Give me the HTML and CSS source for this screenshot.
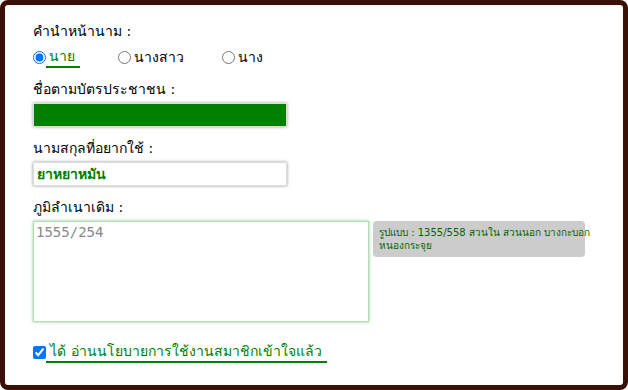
FILE: index.html
```html
<!DOCTYPE html>
<html lang="th">

<head>
    <meta charset="utf-8">
    <title>สมัครสมาชิก</title>
    <link rel="stylesheet" href="styles.css">
</head>

<body>
    <form class="frm">
        <div class="row">
            <label class="lbl">คำนำหน้านาม :</label>
            <div class="radios">
                <label class="opt"><input type="radio" name="title" checked><span class="valgt"> นาย</span></label>
                <label class="opt"><input type="radio" name="title"><span>นางสาว</span></label>
                <label class="opt"><input type="radio" name="title"><span>นาง</span></label>
            </div>
        </div>

        <div class="row">
            <label class="lbl">ชื่อตามบัตรประชาชน :</label>
            <input class="txt fyldt" type="text" value="">
        </div>

        <div class="row">
            <label class="lbl">นามสกุลที่อยากใช้ :</label>
            <input class="txt" type="text" value="ยาหยาหมัน">
        </div>

        <div class="row">
            <label class="lbl">ภูมิลำเนาเดิม :</label>
            <div class="addr">
                <textarea class="area">1555/254</textarea>
                <div class="tip">รูปแบบ : 1355/558 สวนใน สวนนอก บางกะบอก<br>หนองกระจุย</div>
            </div>
        </div>

        <label class="accept"><input type="checkbox" checked><span class="valgt">&nbsp;ได้ อ่านนโยบายการใช้งานสมาชิกเข้าใจแล้ว</span></label>
    </form>
</body>

</html>
```

FILE: styles.css
```css
*,
body * {
    box-sizing: border-box;
}

html {
    height: 100%;
}

body {
    margin: 0;
    height: 100%;
    border: 5px solid #3b1106;
    border-radius: 8px;
    background-color: #fff;
    font-family: Tahoma, "DejaVu Sans", "Noto Sans", sans-serif;
    font-size: 14px;
    color: #000;
}

.frm {
    padding: 16px 0 0 28px;
}

.row {
    margin-bottom: 11px;
}

.lbl {
    display: block;
    line-height: 20px;
    margin-bottom: 4px;
}

.radios {
    display: flex;
    line-height: 20px;
    margin-top: 5px;
}

.opt {
    display: flex;
    align-items: center;
    gap: 3px;
    margin-right: 38px;
}

.opt input {
    margin: 0;
    width: 13px;
    height: 13px;
}

.valgt {
    color: green;
    border-bottom: 2px solid green;
    padding-right: 5px;
}

.opt .valgt {
    margin-left: -3px;
    padding-left: 3px;
}

.txt {
    display: block;
    width: 254px;
    height: 24px;
    border: 1px solid #ddd;
    box-shadow: 0 0 3px #999;
    font-family: Tahoma, "DejaVu Sans", sans-serif;
    font-size: 14px;
    font-weight: bold;
    color: green;
    padding: 2px 3px;
}

.fyldt {
    background-color: green;
}

.addr {
    display: flex;
    align-items: flex-start;
    gap: 4px;
}

.area {
    width: 336px;
    height: 101px;
    border: 1px solid #b5dcb5;
    box-shadow: 0 0 3px #8c8;
    font-family: "DejaVu Sans Mono", monospace;
    font-size: 14px;
    color: #888;
    padding: 2px 2px;
    resize: none;
}

.tip {
    width: 212px;
    background-color: #ccc;
    border-radius: 4px;
    padding: 5px 6px;
    font-size: 10px;
    color: #060;
    line-height: 13px;
    white-space: nowrap;
}

.accept {
    display: inline-flex;
    align-items: center;
    margin-top: 8px;
}

.accept input {
    margin: 0;
    width: 13px;
    height: 13px;
}

.accept .valgt {
    font-size: 14px;
    line-height: 20px;
}
```
